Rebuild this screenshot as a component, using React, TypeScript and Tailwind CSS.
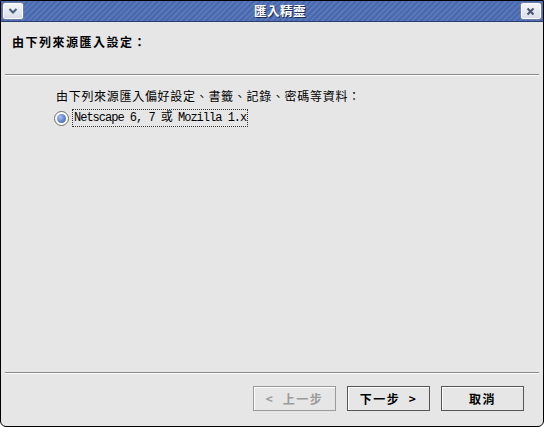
import React from "react";

const cjk = "font-['Noto_Sans_CJK_TC','Noto_Sans_CJK_SC',sans-serif]";

function TitleButton({ children }: { children: React.ReactNode }) {
  return (
    <div className="w-[22px] h-[18px] rounded-[3px] border border-[#6d7fa6] bg-gradient-to-b from-[#f4f6fa] to-[#d8dde8] flex items-center justify-center shadow-[inset_0_0_0_1px_#ffffff]">
      {children}
    </div>
  );
}

function Btn({ children, disabled }: { children: React.ReactNode; disabled?: boolean }) {
  return (
    <div
      className={`w-[83px] h-[25px] border ${disabled ? "border-[#9a9a9a] text-[#9a9a9a]" : "border-[#555555] text-black"} bg-[#e6e6e6] shadow-[inset_1px_1px_0_#ffffff] flex items-center justify-center text-[12px] font-bold tracking-[1.5px] whitespace-pre ${cjk}`}
    >
      {children}
    </div>
  );
}

export default function App() {
  return (
    <div className="w-[544px] h-[427px] bg-white">
      <div className="w-[544px] h-[427px] flex flex-col border border-black rounded-b-[6px] bg-[#e6e6e6] overflow-hidden">
        {/* title bar */}
        <div className="h-[21px] shrink-0 flex items-center justify-between pl-[1px] pr-[1px] bg-[repeating-linear-gradient(135deg,#5877bb_0px,#5877bb_2px,#4a69ad_2px,#4a69ad_4px)] border-b border-[#2c3f6c]">
          <TitleButton>
            <svg width="10" height="8" viewBox="0 0 10 8">
              <path d="M1.5 2 L5 5.5 L8.5 2" stroke="#4a5a80" strokeWidth="2" fill="none" />
            </svg>
          </TitleButton>
          <div className={`ml-[16px] text-white text-[12.5px] font-bold ${cjk} [text-shadow:1px_1px_0_#1d2b4d] tracking-[0.5px]`}>
            匯入精靈
          </div>
          <TitleButton>
            <svg width="9" height="9" viewBox="0 0 9 9">
              <path d="M1.5 1.5 L7.5 7.5 M7.5 1.5 L1.5 7.5" stroke="#4a5470" strokeWidth="2" fill="none" />
            </svg>
          </TitleButton>
        </div>

        {/* header */}
        <div className={`h-[52px] shrink-0 pl-[11px] pt-[11px] text-[12px] font-bold text-black ${cjk} tracking-[1.5px]`}>
          由下列來源匯入設定：
        </div>
        <div className="mx-[4px] h-[2px] border-t border-[#8a8a8a] border-b border-b-white shrink-0" />

        {/* content */}
        <div className="flex-1 pl-[53px] pt-[12px]">
          <div className={`pl-[2px] text-[12px] text-black ${cjk} tracking-[0.7px] leading-[16px]`}>
            由下列來源匯入偏好設定、書籤、記錄、密碼等資料：
          </div>
          <div className="flex items-center mt-[5px]">
            <div className="w-[15px] h-[15px] rounded-full border border-[#6b6b6b] bg-white flex items-center justify-center">
              <div className="w-[9px] h-[9px] rounded-full bg-[radial-gradient(circle_at_35%_35%,#a8c0f0,#2a4fae)]" />
            </div>
            <div className="ml-[3px] border border-dotted border-[#333333] px-[1px] h-[18px] flex items-center text-[12px] tracking-[-1px] text-black font-['Liberation_Mono','Noto_Sans_CJK_TC',monospace]">
              Netscape 6, 7 或 Mozilla 1.x
            </div>
          </div>
        </div>

        <div className="mx-[4px] h-[2px] border-t border-[#8a8a8a] border-b border-b-white shrink-0" />
        <div className="h-[52px] shrink-0 flex justify-end items-start gap-[11px] pr-[19px] pt-[12px]">
          <Btn disabled>{"<  上一步"}</Btn>
          <Btn>{"下一步  >"}</Btn>
          <Btn>取消</Btn>
        </div>
      </div>
    </div>
  );
}
